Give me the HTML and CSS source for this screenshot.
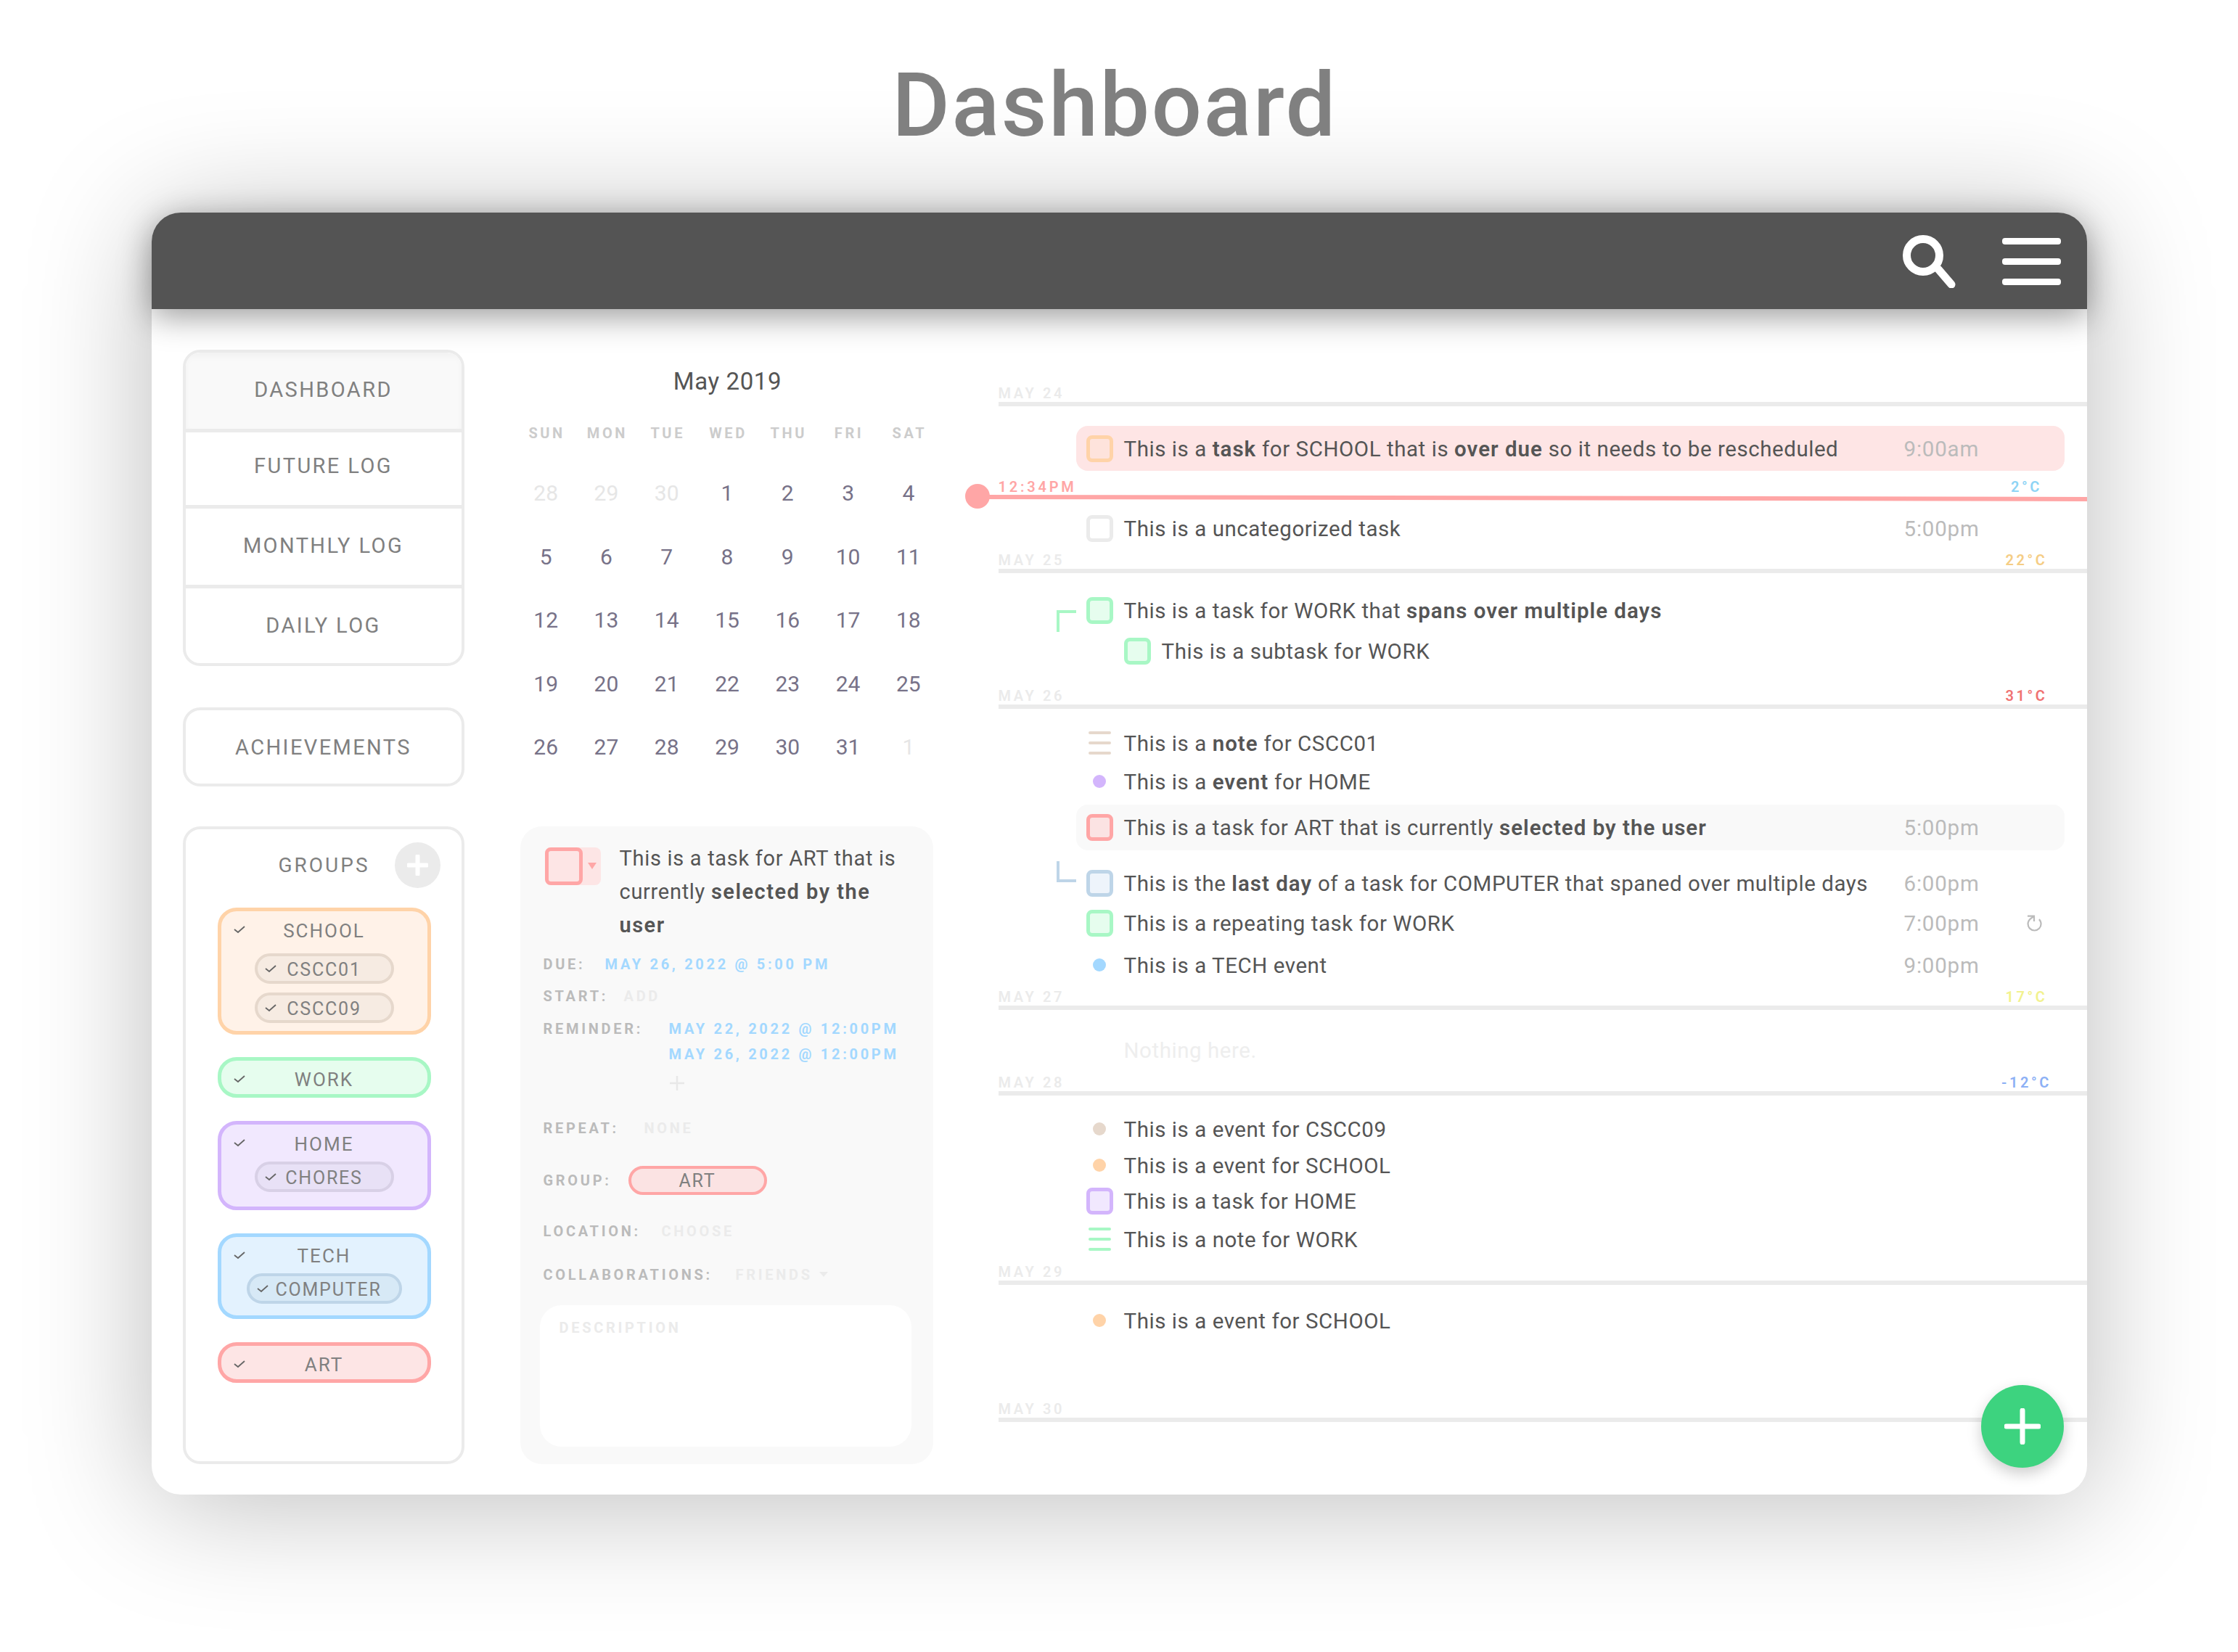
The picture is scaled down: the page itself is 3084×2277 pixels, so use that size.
FILE: index.html
```html
<!DOCTYPE html>
<html lang="en">
<head>
  <meta charset="UTF-8" />
  <title>Dashboard</title>
  <link rel="stylesheet" href="styles.css">
</head>
<body>
  <h1 class="page-title">Dashboard</h1>

  <div class="window">
    <header class="topbar">
      <svg class="search-icon" width="73" height="73" viewBox="0 0 73 73">
        <circle cx="28" cy="28" r="22.5" fill="none" stroke="#fff" stroke-width="11"/>
        <line x1="49" y1="47" x2="67" y2="68" stroke="#fff" stroke-width="11" stroke-linecap="round"/>
      </svg>
      <div class="menu-icon"><span></span><span></span><span></span></div>
    </header>

    <div class="content">
      <aside class="sidebar">
        <nav class="nav-box">
          <a class="nav-item nav-active">DASHBOARD</a>
          <a class="nav-item nav-future">FUTURE LOG</a>
          <a class="nav-item nav-monthly">MONTHLY LOG</a>
          <a class="nav-item nav-daily">DAILY LOG</a>
        </nav>
        <a class="nav-box single-link">ACHIEVEMENTS</a>

        <section class="groups">
          <div class="groups-head">
            GROUPS
            <span class="add-group">
              <svg width="29" height="29" viewBox="0 0 29 29"><path d="M14.5 2v25M2 14.5h25" stroke="#fff" stroke-width="6" stroke-linecap="round"/></svg>
            </span>
          </div>

          <div class="group group-school">
            <svg class="check" viewBox="0 0 16 14"><path d="M1 7l5 4 9-8" /></svg>
            <div class="group-name">SCHOOL</div>
            <div class="chip chip-school"><svg class="check-sm" viewBox="0 0 16 14"><path d="M1 7l5 4 9-8" /></svg>CSCC01</div>
            <div class="chip chip-school chip-next"><svg class="check-sm" viewBox="0 0 16 14"><path d="M1 7l5 4 9-8" /></svg>CSCC09</div>
          </div>

          <div class="group group-work">
            <svg class="check" viewBox="0 0 16 14"><path d="M1 7l5 4 9-8" /></svg>
            <div class="group-name">WORK</div>
          </div>

          <div class="group group-home">
            <svg class="check" viewBox="0 0 16 14"><path d="M1 7l5 4 9-8" /></svg>
            <div class="group-name">HOME</div>
            <div class="chip chip-home"><svg class="check-sm" viewBox="0 0 16 14"><path d="M1 7l5 4 9-8" /></svg>CHORES</div>
          </div>

          <div class="group group-tech">
            <svg class="check" viewBox="0 0 16 14"><path d="M1 7l5 4 9-8" /></svg>
            <div class="group-name">TECH</div>
            <div class="chip chip-tech"><svg class="check-sm" viewBox="0 0 16 14"><path d="M1 7l5 4 9-8" /></svg>COMPUTER</div>
          </div>

          <div class="group group-art">
            <svg class="check" viewBox="0 0 16 14"><path d="M1 7l5 4 9-8" /></svg>
            <div class="group-name">ART</div>
          </div>
        </section>
      </aside>

      <div class="middle">
        <div class="cal-title">May 2019</div>
        <div class="cal-grid">
          <span class="wd">SUN</span><span class="wd">MON</span><span class="wd">TUE</span><span class="wd">WED</span><span class="wd">THU</span><span class="wd">FRI</span><span class="wd">SAT</span>
          <span class="off">28</span><span class="off">29</span><span class="off">30</span><span>1</span><span>2</span><span>3</span><span>4</span>
          <span>5</span><span>6</span><span>7</span><span>8</span><span>9</span><span>10</span><span>11</span>
          <span>12</span><span>13</span><span>14</span><span>15</span><span>16</span><span>17</span><span>18</span>
          <span>19</span><span>20</span><span>21</span><span>22</span><span>23</span><span>24</span><span>25</span>
          <span>26</span><span>27</span><span>28</span><span>29</span><span>30</span><span>31</span><span class="off">1</span>
        </div>

        <section class="detail">
          <div class="detail-head">
            <div class="color-pick"><span class="color-box"></span><span class="color-arrow"></span></div>
            <p>This is a task for ART that is<br>currently <b>selected by the</b><br><b>user</b></p>
          </div>
          <div class="field field-due"><label class="lbl-due">DUE:</label><span class="val">MAY 26, 2022 @ 5:00 PM</span></div>
          <div class="field field-start"><label class="lbl-start">START:</label><span class="empty">ADD</span></div>
          <div class="field field-reminder">
            <label class="lbl-reminder">REMINDER:</label>
            <div class="val-list">
              <span class="val">MAY 22, 2022 @ 12:00PM</span>
              <span class="val">MAY 26, 2022 @ 12:00PM</span>
              <svg class="add-reminder" width="20" height="20" viewBox="0 0 20 20"><path d="M10 0v20M0 10h20" stroke="#e8e8e8" stroke-width="2.5"/></svg>
            </div>
          </div>
          <div class="field field-repeat"><label class="lbl-repeat">REPEAT:</label><span class="empty">NONE</span></div>
          <div class="field field-group"><label class="lbl-group">GROUP:</label><span class="group-pill">ART</span></div>
          <div class="field field-location"><label class="lbl-location">LOCATION:</label><span class="empty">CHOOSE</span></div>
          <div class="field field-collab"><label class="lbl-collab">COLLABORATIONS:</label><span class="empty">FRIENDS</span><span class="friends-arrow"></span></div>
          <div class="desc-box">DESCRIPTION</div>
        </section>
      </div>

      <main class="timeline">
        <div class="now">
          <span class="now-dot"></span>
          <span class="now-line"></span>
          <span class="now-time">12:34PM</span>
          <span class="temp now-temp t-cold">2°C</span>
        </div>

        <div class="day-head"><span>MAY 24</span></div>
        <div class="row row-hl hl-red mt-27">
          <span class="box box-school"></span>
          <div class="text">This is a <b>task</b> for SCHOOL that is <b>over due</b> so it needs to be rescheduled</div>
          <div class="time">9:00am</div>
        </div>
        <div class="row mt-59">
          <span class="box box-none"></span>
          <div class="text">This is a uncategorized task</div>
          <div class="time">5:00pm</div>
        </div>

        <div class="day-head mt-12"><span>MAY 25</span><span class="temp t-warm">22°C</span></div>
        <div class="row mt-31">
          <i class="span-top"></i>
          <span class="box box-work"></span>
          <div class="text">This is a task for WORK that <b>spans over multiple days</b></div>
        </div>
        <div class="row row-sub mt-16">
          <span class="box box-work"></span>
          <div class="text">This is a subtask for WORK</div>
        </div>

        <div class="day-head mt-30"><span>MAY 26</span><span class="temp t-hot">31°C</span></div>
        <div class="row mt-27">
          <span class="note note-cscc"><i></i><i></i><i></i></span>
          <div class="text">This is a <b>note</b> for CSCC01</div>
        </div>
        <div class="row mt-13">
          <span class="icon-slot"><span class="dot dot-home"></span></span>
          <div class="text">This is a <b>event</b> for HOME</div>
        </div>
        <div class="row row-hl row-hl-tall hl-grey mt-12">
          <span class="box box-art"></span>
          <div class="text">This is a task for ART that is currently <b>selected by the user</b></div>
          <div class="time">5:00pm</div>
        </div>
        <div class="row mt-25">
          <i class="span-bottom"></i>
          <span class="box box-computer"></span>
          <div class="text">This is the <b>last day</b> of a task for COMPUTER that spaned over multiple days</div>
          <div class="time">6:00pm</div>
        </div>
        <div class="row mt-15">
          <span class="box box-work"></span>
          <div class="text">This is a repeating task for WORK</div>
          <div class="time">7:00pm
            <svg class="repeat" width="21" height="23" viewBox="0 0 21 23"><path d="M16.9 6.1A9 9 0 1 1 4.1 6.2L10 1.7M1 1.7H10V9" fill="none" stroke="#bbb" stroke-width="2.2"/></svg>
          </div>
        </div>
        <div class="row mt-18">
          <span class="icon-slot"><span class="dot dot-tech"></span></span>
          <div class="text">This is a TECH event</div>
          <div class="time">9:00pm</div>
        </div>

        <div class="day-head mt-12"><span>MAY 27</span><span class="temp t-mild">17°C</span></div>
        <div class="row mt-35">
          <span class="icon-slot"></span>
          <div class="text text-empty">Nothing here.</div>
        </div>

        <div class="day-head mt-13"><span>MAY 28</span><span class="temp t-freeze">-12°C</span></div>
        <div class="row mt-26">
          <span class="icon-slot"><span class="dot dot-cscc"></span></span>
          <div class="text">This is a event for CSCC09</div>
        </div>
        <div class="row mt-10">
          <span class="icon-slot"><span class="dot dot-school"></span></span>
          <div class="text">This is a event for SCHOOL</div>
        </div>
        <div class="row mt-9">
          <span class="box box-home"></span>
          <div class="text">This is a task for HOME</div>
        </div>
        <div class="row mt-13">
          <span class="note note-work"><i></i><i></i><i></i></span>
          <div class="text">This is a note for WORK</div>
        </div>

        <div class="day-head mt-13"><span>MAY 29</span></div>
        <div class="row mt-29">
          <span class="icon-slot"><span class="dot dot-school"></span></span>
          <div class="text">This is a event for SCHOOL</div>
        </div>

        <div class="day-head mt-90"><span>MAY 30</span></div>

        <button class="fab">
          <svg width="50" height="50" viewBox="0 0 50 50"><path d="M25 3v44M3 25h44" stroke="#fff" stroke-width="7" stroke-linecap="round"/></svg>
        </button>
      </main>
    </div>
  </div>
</body>
</html>
```

FILE: styles.css
```css
* { box-sizing: border-box; }
body { margin: 0; background: #fff; font-family: Roboto, "Open Sans", sans-serif; color: #555; min-height: 2277px; }
b { font-weight: 600; }

.page-title { margin: 0; height: 293px; padding-right: 12px; line-height: 292px; text-align: center; font-size: 122px; font-weight: 500; letter-spacing: 2.6px; color: #808080; }

.window { width: 2667px; height: 1767px; margin: 0 auto; background: #fff; border-radius: 40px; box-shadow: 0 10px 170px rgba(0,0,0,0.27); }
.topbar { height: 133px; background: #545454; border-radius: 40px 40px 0 0; box-shadow: 0 10px 45px rgba(0,0,0,0.4); display: flex; justify-content: flex-end; align-items: flex-start; padding: 31px 36px 0 0; position: relative; }
.search-icon { margin-right: 64px; }
.menu-icon { width: 81px; height: 65px; margin-top: 4px; display: flex; flex-direction: column; justify-content: space-between; }
.menu-icon span { height: 9px; background: #fff; border-radius: 4px; }

.content { display: flex; align-items: flex-start; padding-left: 43px; }

/* left column */
.sidebar { width: 388px; padding-top: 56px; }
.nav-box { display: block; border: 4px solid #ebebeb; border-radius: 24px; color: #808080; font-size: 29px; letter-spacing: 2.4px; text-align: center; overflow: hidden; }
.nav-item { display: block; border-bottom: 5px solid #ebebeb; }
.nav-item:last-child { border-bottom: none; }
.nav-active { height: 110px; line-height: 103px; background: #f9f9f9; box-shadow: inset 0 6px 10px rgba(0,0,0,0.03); }
.nav-future { height: 105px; line-height: 93px; }
.nav-monthly { height: 110px; line-height: 103px; }
.nav-daily { height: 103px; line-height: 102px; }
.single-link { height: 109px; line-height: 102px; margin-top: 57px; }

.groups { height: 879px; margin-top: 55px; border: 4px solid #ebebeb; border-radius: 24px; padding: 18px 42px 0 44px; color: #808080; }
.groups-head { height: 63px; line-height: 63px; text-align: center; font-size: 28px; letter-spacing: 3px; position: relative; margin-bottom: 27px; }
.add-group { position: absolute; right: -13px; top: 0; width: 63px; height: 63px; border-radius: 50%; background: #ebebeb; display: flex; align-items: center; justify-content: center; }

.group { position: relative; border: 5px solid; border-radius: 26px; padding-bottom: 12px; margin-bottom: 32px; text-align: center; font-size: 26px; letter-spacing: 2px; }
.group-name { line-height: 50px; height: 46px; margin-top: 2px; }
.group-school { border-color: #ffd3a8; background: #fff2e8; height: 175px; margin-bottom: 31px; }
.group-work { border-color: #a8f7c5; background: #e6fdee; height: 56px; }
.group-home { border-color: #d3b5fc; background: #f1e8fe; height: 123px; }
.group-tech { border-color: #a3d8ff; background: #e3f2fe; height: 118px; }
.group-art { border-color: #ffa6a6; background: #fde5e5; height: 56px; margin-bottom: 0; }
.group-tech .group-name { margin-top: 1px; }
.group-work .group-name, .group-art .group-name { line-height: 53px; margin-top: 0; }

.check { position: absolute; left: 17px; top: 18px; width: 16px; height: 14px; fill: none; stroke: #666; stroke-width: 1.8; }
.check-sm { position: absolute; left: 10px; top: 10px; width: 16px; height: 14px; fill: none; stroke: #666; stroke-width: 1.8; }

.chip { position: relative; width: 192px; height: 42px; margin: 10px auto 0; padding-top: 2px; border: 4px solid; border-radius: 21px; display: flex; align-items: center; justify-content: center; font-size: 25px; letter-spacing: 1.8px; }
.chip-next { margin-top: 12px; }
.chip-school { background: #f6ebe2; border-color: #e6d8cc; }
.chip-home { background: #e8e1f6; border-color: #d8d0e6; margin-top: 3px; }
.chip-tech { width: 214px; padding-left: 12px; background: #d7e9f6; border-color: #bed5e8; margin-top: 3px; }

/* middle column */
.middle { width: 569px; margin-left: 77px; }
.cal-title { margin-top: 77px; height: 46px; line-height: 46px; text-align: center; font-size: 33px; letter-spacing: 0.6px; color: #555; padding-left: 3px; }
.cal-grid { width: 583px; margin: 24px 0 0 -6px; display: grid; grid-template-columns: repeat(7, 1fr); grid-template-rows: 63px; grid-auto-rows: 87.5px; text-align: center; font-size: 30px; color: #777288; line-height: 87.5px; }
.cal-grid .wd { font-size: 20px; font-weight: 700; letter-spacing: 3.6px; padding-left: 3px; color: #ccc; line-height: 49px; height: 49px; }
.cal-grid .off { color: #e6e6e6; }

.detail { margin-top: 65px; height: 879px; background: #f9f9f9; border-radius: 30px; padding: 21px 30px 0 27px; font-size: 20px; letter-spacing: 3.7px; font-weight: 700; }
.detail-head { display: flex; align-items: flex-start; padding-left: 7px; }
.detail-head p { margin: 0 0 0 26px; font-size: 29px; line-height: 46px; font-weight: 400; letter-spacing: 0.7px; color: #555; width: 390px; }
.detail-head b { letter-spacing: 1.5px; }
.color-pick { flex: none; width: 77px; height: 52px; margin-top: 8px; background: #fde5e5; border-radius: 8px; display: flex; align-items: center; }
.color-box { width: 52px; height: 52px; border: 5px solid #ffa6a6; border-radius: 8px; }
.color-arrow { margin-left: 7px; border: 6px solid transparent; border-top: 9px solid #ffa6a6; border-bottom: none; }

.field { display: flex; padding-left: 5px; line-height: 24px; white-space: nowrap; }
.field label { color: #bbb; }
.val { color: #a3d8ff; display: block; }
.empty { color: #ebebeb; }
.lbl-due { width: 85px; }
.lbl-start { width: 111px; }
.lbl-reminder { width: 173px; }
.lbl-repeat { width: 139px; }
.lbl-group { width: 117px; }
.lbl-location { width: 163px; }
.lbl-collab { width: 265px; }
.field-due { margin-top: 19px; }
.field-start { margin-top: 20px; }
.field-reminder { margin-top: 16px; line-height: 35px; }
.add-reminder { display: block; margin: 12px 0 0 1px; }
.field-repeat { margin-top: 40px; }
.field-group { margin-top: 40px; line-height: 40px; }
.field-location { margin-top: 38px; }
.field-collab { margin-top: 36px; align-items: center; }
.group-pill { width: 191px; height: 40px; border: 4px solid #ffa6a6; border-radius: 20px; background: #fbe3e3; color: #808080; text-align: center; line-height: 34px; font-size: 25px; font-weight: 400; letter-spacing: 1.8px; }
.friends-arrow { margin-left: 9px; border: 6px solid transparent; border-top: 7px solid #ebebeb; border-bottom: none; }
.desc-box { margin-top: 30px; height: 195px; width: 512px; background: #fff; border-radius: 30px; padding: 19px 27px; color: #ebebeb; line-height: 24px; }

/* timeline */
.timeline { position: relative; flex: 1; margin-left: 90px; height: 1634px; padding-top: 104px; }
.day-head { height: 30px; border-bottom: 6px solid #ebebeb; display: flex; justify-content: space-between; font-size: 20px; font-weight: 600; letter-spacing: 3.6px; line-height: 24px; color: #ebebeb; }
.temp { width: 100px; margin-right: 33px; text-align: center; }
.t-cold { color: #8ed4f5; }
.t-warm { color: #f5cd85; }
.t-hot { color: #f07272; }
.t-mild { color: #f2f28e; }
.t-freeze { color: #8cb0f5; }

.now { position: absolute; left: -46px; right: 0; top: 241px; height: 34px; z-index: 2; }
.now-dot { position: absolute; left: 0; top: 0; width: 34px; height: 34px; border-radius: 50%; background: #ffa6a6; }
.now-line { position: absolute; left: 17px; right: 0; top: 15px; height: 6px; background: #ffa6a6; transform-origin: left center; transform: rotate(0.11deg); }
.now-time { position: absolute; left: 46px; top: -8px; font-size: 20px; font-weight: 600; letter-spacing: 3.8px; line-height: 24px; color: #ffa6a6; }
.now-temp { position: absolute; right: 0; top: -8px; font-size: 20px; font-weight: 600; letter-spacing: 3.6px; line-height: 24px; }

.row { position: relative; height: 40px; margin-left: 107px; margin-right: 31px; padding-left: 14px; display: flex; align-items: center; font-size: 29.5px; letter-spacing: 0.55px; white-space: nowrap; color: #555; }
.row b { letter-spacing: 1px; }
.row-sub { padding-left: 66px; }
.row-hl { height: 62px; border-radius: 16px; }
.row-hl-tall { height: 63px; }
.hl-red { background: #fee5e5; }
.hl-grey { background: #f9f9f9; }
.text { flex: 1; margin-left: 15px; padding-top: 1px; }
.text-empty { color: #eee; }
.time { flex: 0 0 221px; color: #bbb; letter-spacing: 0.8px; display: flex; align-items: center; padding-top: 1px; }
.repeat { margin-left: 65px; }

.box { flex: none; width: 37px; height: 37px; border: 5px solid; border-radius: 8px; }
.box-none { border-color: #ebebeb; }
.box-school { border-color: #ffd3a8; background: #fee3dc; }
.box-work { border-color: #a8f7c5; background: #e6fdee; }
.box-art { border-color: #ffa6a6; background: #fbe3e3; }
.box-computer { border-color: #bed5e8; background: #eef4fb; }
.box-home { border-color: #d3b5fc; background: #f1e8fe; }

.icon-slot { flex: none; width: 37px; height: 37px; display: flex; align-items: center; justify-content: center; }
.dot { width: 18px; height: 18px; border-radius: 50%; }
.dot-home { background: #d3b5fc; }
.dot-tech { background: #a3d8ff; }
.dot-cscc { background: #e6d8cc; }
.dot-school { background: #ffd3a8; }

.note { flex: none; width: 37px; height: 32px; padding: 0 3px; display: flex; flex-direction: column; justify-content: space-between; }
.note i { display: block; height: 4px; border-radius: 2px; }
.note-cscc i { background: #e6d8cc; }
.note-work i { background: #a8f7c5; }

.span-top { position: absolute; left: -27px; top: 20px; width: 27px; height: 30px; border-top: 4px solid #a8f7c5; border-left: 4px solid #a8f7c5; }
.span-bottom { position: absolute; left: -27px; top: -10px; width: 27px; height: 29px; border-bottom: 4px solid #bed5e8; border-left: 4px solid #bed5e8; }

.mt-9 { margin-top: 9px; }
.mt-10 { margin-top: 10px; }
.mt-12 { margin-top: 12px; }
.mt-13 { margin-top: 13px; }
.mt-15 { margin-top: 15px; }
.mt-16 { margin-top: 16px; }
.mt-18 { margin-top: 18px; }
.mt-25 { margin-top: 25px; }
.mt-26 { margin-top: 26px; }
.mt-27 { margin-top: 27px; }
.mt-29 { margin-top: 29px; }
.mt-30 { margin-top: 30px; }
.mt-31 { margin-top: 31px; }
.mt-35 { margin-top: 35px; }
.mt-59 { margin-top: 59px; }
.mt-90 { margin-top: 90px; }

.fab { position: absolute; right: 32px; bottom: 37px; width: 114px; height: 114px; padding: 0; border: none; border-radius: 50%; background: #3dd37f; box-shadow: 0 8px 20px rgba(0,0,0,0.2); display: flex; align-items: center; justify-content: center; }
```
